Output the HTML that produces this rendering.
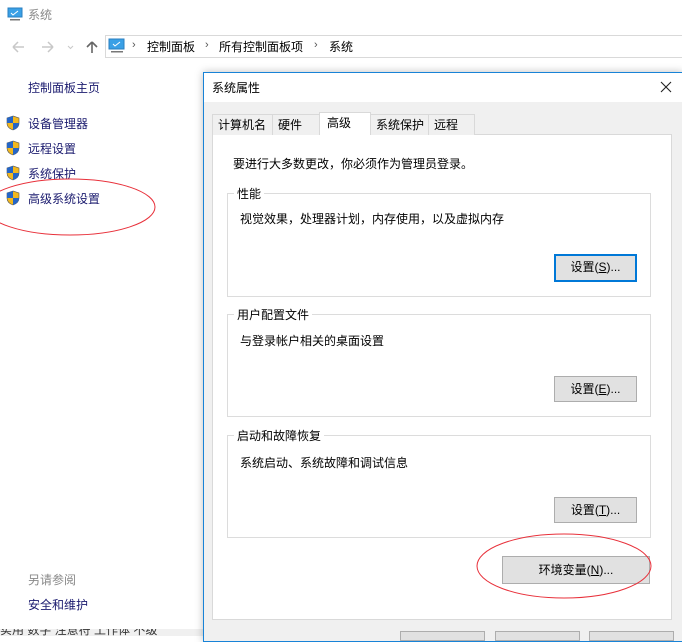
<!DOCTYPE html>
<html><head><meta charset="utf-8"><style>
*{margin:0;padding:0;box-sizing:border-box}
body{width:682px;height:636px;overflow:hidden;background:#fff;font-family:"Liberation Sans","Noto Sans CJK SC",sans-serif;font-size:12px;color:#000;position:relative}
.a{position:absolute;white-space:nowrap}
.btn{position:absolute;background:#e1e1e1;border:1px solid #adadad;text-align:center;line-height:24px;font-size:12px}
.grp{position:absolute;border:1px solid #dcdcdc}
.grp .t{position:absolute;top:-9px;left:6px;background:#fff;padding:0 3px}
.tab{position:absolute;top:114px;height:21px;background:#f0f0f0;border:1px solid #d9d9d9;border-bottom:none;line-height:20px;padding-left:5px}
</style></head><body>
<svg class="a" style="left:7px;top:7px" width="16" height="14"><rect x="1" y="1" width="14" height="9" fill="#3aa0e6" stroke="#2a7fc0"/><path d="M4 6l2 2 5-4" stroke="#fff" fill="none"/><rect x="3" y="12" width="10" height="1.5" fill="#777"/></svg>
<div class="a" style="left:28px;top:6px;color:#888;font-size:12px">系统</div>
<svg class="a" style="left:10px;top:40px" width="90" height="14"><path d="M3 7h11M3 7l5-5M3 7l5 5" stroke="#c8c8c8" fill="none" stroke-width="1.5"/><path d="M32 7h11M43 7l-5-5M43 7l-5 5" stroke="#c8c8c8" fill="none" stroke-width="1.5"/><path d="M58 6l2.5 2.5L63 6" stroke="#c8c8c8" fill="none"/><path d="M82 13V2M82 2l-5 5M82 2l5 5" stroke="#666" fill="none" stroke-width="1.6"/></svg>
<div class="a" style="left:105px;top:35px;width:590px;height:23px;border:1px solid #d9d9d9"></div>
<svg class="a" style="left:108px;top:38px" width="18" height="16"><rect x="1" y="1" width="15" height="10" fill="#3aa0e6" stroke="#2a7fc0"/><path d="M5 6l2 2 5-4" stroke="#fff" fill="none"/><rect x="3" y="13" width="12" height="1.5" fill="#777"/></svg>
<div class="a" style="left:132px;top:39px;color:#555;font-size:11px">›</div>
<div class="a" style="left:147px;top:38px">控制面板</div>
<div class="a" style="left:205px;top:39px;color:#555;font-size:11px">›</div>
<div class="a" style="left:219px;top:38px">所有控制面板项</div>
<div class="a" style="left:314px;top:39px;color:#555;font-size:11px">›</div>
<div class="a" style="left:329px;top:38px">系统</div>
<div class="a" style="left:28px;top:79px;color:#1a1a6e">控制面板主页</div>
<svg width="0" height="0" style="position:absolute"><defs><symbol id="sh" viewBox="0 0 14 16"><path d="M7 1L1 3v5c0 4 3 6 6 7 3-1 6-3 6-7V3z" fill="#f2b81e" stroke="#555" stroke-width=".6"/><path d="M7 1L1 3v5h6z" fill="#2566c6"/><path d="M7 8h6c0 4-3 6-6 7z" fill="#2566c6"/></symbol></defs></svg>
<svg class="a" style="left:6px;top:115px" width="14" height="16"><use href="#sh"/></svg>
<div class="a" style="left:28px;top:115px;color:#1a1a6e">设备管理器</div>
<svg class="a" style="left:6px;top:140px" width="14" height="16"><use href="#sh"/></svg>
<div class="a" style="left:28px;top:140px;color:#1a1a6e">远程设置</div>
<svg class="a" style="left:6px;top:165px" width="14" height="16"><use href="#sh"/></svg>
<div class="a" style="left:28px;top:165px;color:#1a1a6e">系统保护</div>
<svg class="a" style="left:6px;top:190px" width="14" height="16"><use href="#sh"/></svg>
<div class="a" style="left:28px;top:190px;color:#1a1a6e">高级系统设置</div>
<div class="a" style="left:28px;top:571px;color:#888">另请参阅</div>
<div class="a" style="left:28px;top:596px;color:#1a1a6e">安全和维护</div>
<div class="a" style="left:0;top:629px;width:203px;height:7px;background:#f0f0f0;overflow:hidden"><div style="margin-top:-8px;color:#333">实用 数字 注意符 工作体 不级</div></div>
<div class="a" style="left:203px;top:72px;width:480px;height:570px;background:#f0f0f0;border:1px solid #1883d7;box-shadow:0 0 8px rgba(0,0,0,.25)"></div>
<div class="a" style="left:204px;top:73px;width:478px;height:29px;background:#fff"></div>
<div class="a" style="left:212px;top:79px">系统属性</div>
<svg class="a" style="left:660px;top:81px" width="12" height="12"><path d="M1 1l10 10M11 1L1 11" stroke="#222" stroke-width="1.1"/></svg>
<div class="a" style="left:212px;top:134px;width:460px;height:486px;background:#fff;border:1px solid #d9d9d9"></div>
<div class="tab" style="left:212px;width:61px">计算机名</div>
<div class="tab" style="left:272px;width:48px">硬件</div>
<div class="tab" style="left:319px;top:112px;height:23px;width:52px;background:#fff;padding-left:7px">高级</div>
<div class="tab" style="left:370px;width:59px">系统保护</div>
<div class="tab" style="left:428px;width:47px">远程</div>
<div class="a" style="left:233px;top:155px">要进行大多数更改，你必须作为管理员登录。</div>
<div class="grp" style="left:227px;top:193px;width:424px;height:104px"><span class="t">性能</span></div>
<div class="a" style="left:240px;top:210px">视觉效果，处理器计划，内存使用，以及虚拟内存</div>
<div class="btn" style="left:554px;top:254px;width:83px;height:28px;border:2px solid #0078d7;line-height:23px">设置(<u>S</u>)...</div>
<div class="grp" style="left:227px;top:314px;width:424px;height:103px"><span class="t">用户配置文件</span></div>
<div class="a" style="left:240px;top:332px">与登录帐户相关的桌面设置</div>
<div class="btn" style="left:554px;top:376px;width:83px;height:26px">设置(<u>E</u>)...</div>
<div class="grp" style="left:227px;top:435px;width:424px;height:103px"><span class="t">启动和故障恢复</span></div>
<div class="a" style="left:240px;top:454px">系统启动、系统故障和调试信息</div>
<div class="btn" style="left:554px;top:497px;width:83px;height:26px">设置(<u>T</u>)...</div>
<div class="btn" style="left:502px;top:556px;width:148px;height:28px;line-height:26px">环境变量(<u>N</u>)...</div>
<div class="btn" style="left:400px;top:631px;width:85px;height:10px"></div>
<div class="btn" style="left:495px;top:631px;width:85px;height:10px"></div>
<div class="btn" style="left:589px;top:631px;width:85px;height:10px"></div>
<svg class="a" style="left:0;top:0" width="682" height="636"><ellipse cx="70" cy="207" rx="85" ry="28" fill="none" stroke="#e8303a" stroke-width="1"/><ellipse cx="564" cy="566" rx="87" ry="32" fill="none" stroke="#e8303a" stroke-width="1"/></svg>
</body></html>
